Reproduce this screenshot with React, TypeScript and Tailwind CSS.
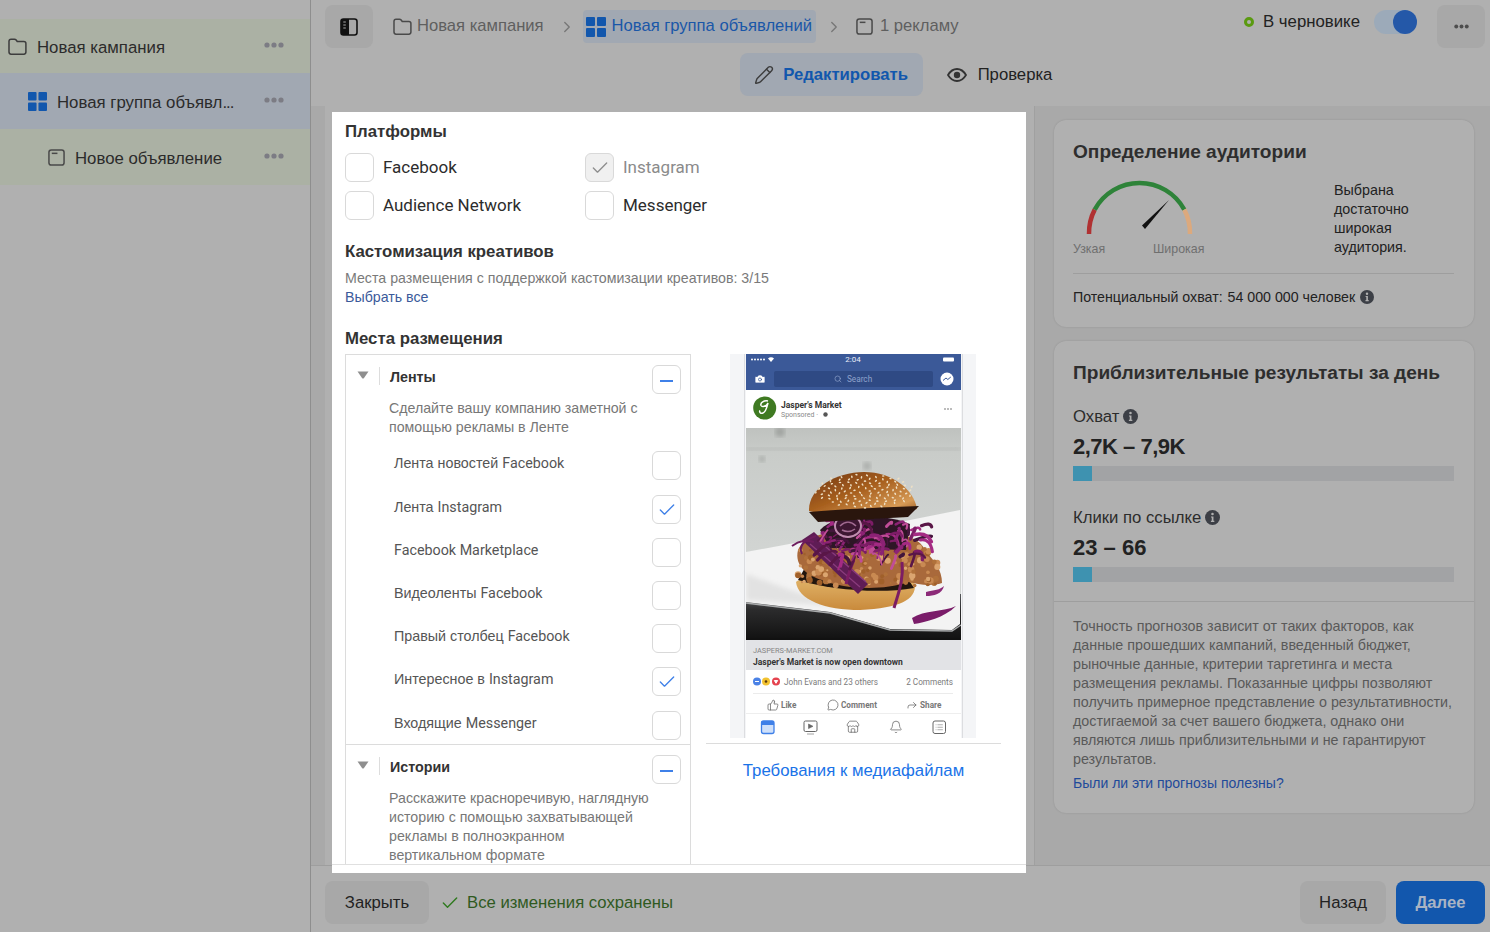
import { Bell, Camera, Check, ChevronRight, Forward, List, MessageCircle, Pencil, Search, Store, ThumbsUp } from 'lucide-react';

const roboto = "font-['Roboto',sans-serif]";

function FolderIcon({ className }: { className?: string }) {
  return (
    <svg viewBox="0 0 20 18" fill="none" stroke="currentColor" strokeWidth="1.6" className={className}>
      <path d="M1 3.5C1 2.1 1.9 1.2 3.2 1.2h3.6c.8 0 1.3.4 1.8 1l1.1 1.5h7c1.2 0 2.2.9 2.2 2.2v9c0 1.3-.9 2.2-2.2 2.2H3.2C1.9 17 1 16.1 1 14.8z" />
    </svg>
  );
}

function GridIcon({ className }: { className?: string }) {
  return (
    <svg viewBox="0 0 20 20" fill="#1257ad" className={className}>
      <rect x="0" y="0" width="9" height="9" rx="1" />
      <rect x="11" y="0" width="9" height="9" rx="1" />
      <rect x="0" y="11" width="9" height="9" rx="1" />
      <rect x="11" y="11" width="9" height="9" rx="1" />
    </svg>
  );
}

function AdIcon({ className }: { className?: string }) {
  return (
    <svg viewBox="0 0 18 18" fill="none" stroke="currentColor" strokeWidth="1.6" className={className}>
      <rect x="1" y="1" width="16" height="16" rx="2.5" />
      <path d="M4 4.6h6" />
    </svg>
  );
}

function Dots({ className }: { className?: string }) {
  return (
    <svg viewBox="0 0 20 6" fill="currentColor" className={className}>
      <circle cx="3" cy="3" r="2.6" />
      <circle cx="10" cy="3" r="2.6" />
      <circle cx="17" cy="3" r="2.6" />
    </svg>
  );
}

function InfoIcon({ className }: { className?: string }) {
  return (
    <svg viewBox="0 0 14 14" className={className}>
      <circle cx="7" cy="7" r="7" fill="#3c3f46" />
      <circle cx="7" cy="3.8" r="1.2" fill="#b0b0b0" />
      <path d="M5.6 6h2.3v4.1h.8v1.1H5.5v-1.1h.8V7.100h-.7z" fill="#b0b0b0" />
    </svg>
  );
}

function Box({ state, className = '' }: { state?: 'check' | 'minus' | 'disabled'; className?: string }) {
  return (
    <span
      className={`flex h-[29px] w-[29px] shrink-0 items-center justify-center rounded-md border border-[#d9d9d9] ${
        state === 'disabled' ? 'bg-[#f0f0f0] border-[#c8c8c8]' : 'bg-white'
      } ${className}`}
    >
      {state === 'check' && <Check size={20} strokeWidth={1.6} className="text-[#3f80e8]" />}
      {state === 'disabled' && <Check size={20} strokeWidth={1.6} className="text-[#8d8d8d]" />}
      {state === 'minus' && <span className="mt-[2px] h-[2px] w-[13px] bg-[#3f80e8]" />}
    </span>
  );
}

function Caret() {
  return (
    <svg viewBox="0 0 12 8" className="mt-[3px] h-2 w-3 shrink-0">
      <path d="M0.500 0.500h11L6.800 7.200c-.4.500-1.200.500-1.600 0z" fill="#8f8f8f" />
    </svg>
  );
}

function SideRow({ tint, pad, icon, label, tall }: { tint: string; pad: string; icon: React.ReactNode; label: React.ReactNode; tall?: boolean }) {
  return (
    <div className={`flex items-center ${tall ? 'h-[56px]' : 'h-[54px]'} ${tint} ${pad} pr-[26px]`}>
      {icon}
      <span className="w-[186px] flex-1 truncate pt-[3px] text-[16.8px] text-[#2b2b2b]">{label}</span>
      <Dots className="h-[6px] w-5 -translate-y-[1px] text-[#7c7c84]" />
    </div>
  );
}

function Platform({ label, state, muted }: { label: string; state?: 'disabled'; muted?: boolean }) {
  return (
    <label className="flex w-[240px] items-center gap-[9px]">
      <Box state={state} />
      <span className={`${roboto} text-[17px] ${muted ? 'text-[#8b8b8b]' : 'text-[#2c2c2c]'}`}>{label}</span>
    </label>
  );
}

function Placement({ children, checked }: { children: React.ReactNode; checked?: boolean }) {
  return (
    <div className="flex h-[43px] justify-between pl-[48px] pr-[9px]">
      <span className="pt-[2px] text-[14.3px] leading-[20px] text-[#555]">{children}</span>
      <Box state={checked ? 'check' : undefined} />
    </div>
  );
}

function SectionHead({ title, children }: { title: string; children: React.ReactNode }) {
  return (
    <>
      <div className="flex items-start pl-[11px] pr-[9px] pt-[10px]">
        <span className="mt-[3px] flex h-[18px] w-[22px] items-start">
          <Caret />
        </span>
        <span className="mt-[2px] h-[18px] border-l border-[#ddd] pl-[10px] text-[14.3px] font-bold leading-[20px] text-[#333]">{title}</span>
        <Box state="minus" className="ml-auto" />
      </div>
      <p className="pl-[43px] pr-[36px] pt-[5px] text-[14.2px] leading-[19px] text-[#777]">{children}</p>
    </>
  );
}

// deterministic scatter for the photo-like burger texture
function rnd(seed: number) {
  const v = Math.sin(seed * 12.9898) * 43758.5453;
  return v - Math.floor(v);
}

const sesame = Array.from({ length: 110 }, (_, i) => {
  const a = (i * 137.5 * Math.PI) / 180;
  const r = Math.sqrt((i + 1) / 110);
  return { x: 135 + Math.cos(a) * r * 50, y: 137 + Math.sin(a) * r * 17, rot: i * 40 };
});

const crumbs = Array.from({ length: 150 }, (_, i) => ({
  x: 68 + rnd(i + 1) * 140,
  y: 192 + rnd(i + 300) * 40,
  r: 1 + rnd(i + 600) * 2.4,
  c: ['#c98a52', '#b0713a', '#dba56f', '#a0602c'][i % 4],
}));

const strandColors = ['#7d1f66', '#a42c83', '#5a1747', '#c04e97', '#8c2474', '#43123a'];
const strands = Array.from({ length: 90 }, (_, i) => {
  const x = 92 + rnd(i + 11) * 100;
  const y = 164 + rnd(i + 111) * 36 + Math.abs(x - 145) * 0.14;
  const dx = (rnd(i + 211) - 0.5) * 34;
  const dy = (rnd(i + 311) - 0.3) * 20;
  return {
    d: `M${x} ${y}q${dx * 0.5 + 4} ${dy * 0.2 - 4} ${dx} ${dy}`,
    c: strandColors[i % strandColors.length],
    w: 1 + rnd(i + 411) * 2.6,
  };
});

function PhonePreview() {
  return (
    <svg viewBox="0 0 246 384" className="h-[384px] w-[246px] shrink-0">
      <defs>
        <linearGradient id="wall" x1="0" y1="0" x2="0" y2="1">
          <stop offset="0" stopColor="#bfc2bf" />
          <stop offset="0.12" stopColor="#c9ccc9" />
          <stop offset="0.6" stopColor="#d2d5d3" />
        </linearGradient>
        <linearGradient id="bun" x1="0" y1="0" x2="1" y2="1">
          <stop offset="0" stopColor="#6f3512" />
          <stop offset="0.45" stopColor="#a8601f" />
          <stop offset="0.8" stopColor="#d69a55" />
          <stop offset="1" stopColor="#8a4d1c" />
        </linearGradient>
        <linearGradient id="lowerBun" x1="0" y1="0" x2="0" y2="1">
          <stop offset="0" stopColor="#e2b56a" />
          <stop offset="1" stopColor="#c98a3c" />
        </linearGradient>
        <linearGradient id="tray" x1="0" y1="0" x2="0" y2="1">
          <stop offset="0" stopColor="#55575a" />
          <stop offset="0.35" stopColor="#2b2b2c" />
          <stop offset="1" stopColor="#111" />
        </linearGradient>
        <filter id="soft">
          <feGaussianBlur stdDeviation="0.6" />
        </filter>
        <filter id="softer">
          <feGaussianBlur stdDeviation="2.5" />
        </filter>
        <clipPath id="photo">
          <rect x="16" y="74" width="215" height="212" />
        </clipPath>
      </defs>

      <rect x="0" width="246" height="384" fill="#f4f5f7" />
      <rect x="14" width="1" height="384" fill="#dcdde0" />
      <rect x="232" width="1" height="384" fill="#dcdde0" />
      <rect x="16" width="215" height="36" fill="#3b5998" />
      <g fill="#fff">
        <circle cx="22" cy="5.500" r="1" />
        <circle cx="25" cy="5.500" r="1" />
        <circle cx="28" cy="5.500" r="1" />
        <circle cx="31" cy="5.500" r="1" />
        <circle cx="34" cy="5.500" r="1" />
        <path d="M38 4.500a4 4 0 0 1 6 0l-3 3.500z" />
        <rect x="213" y="3.500" width="11" height="4" rx="1" />
      </g>
      <text x="123" y="8" textAnchor="middle" fontSize="8" fill="#e8edf7" fontFamily="Roboto, sans-serif">2:04</text>
      <rect x="44" y="17" width="159" height="16" rx="2" fill="#2f4a84" />
      <Search x="104" y="21" width="8" height="8" color="#8fa3cc" strokeWidth={2} />
      <text x="117" y="27.500" fontSize="8.200" fill="#8fa3cc" fontFamily="Roboto, sans-serif">Search</text>
      <Camera x="24" y="19" width="12" height="12" color="#3b5998" fill="#fff" strokeWidth={1.500} />
      <circle cx="217" cy="25" r="6.500" fill="#fff" />
      <path d="M213 26.500l3-2.500 1.800 1.500 3-2.500" fill="none" stroke="#3b5998" strokeWidth="1" />

      <rect x="16" y="36" width="215" height="38" fill="#fff" />
      <circle cx="34.700" cy="54" r="11.500" fill="#3f7a22" />
      <path d="M38 47c-4-1-8 2-7 4.500 1 2 5 1 7-2.500-1 4-2 9-5 10-2.500 1-4-1-3-2.500" fill="none" stroke="#fff" strokeWidth="1.500" />
      <text x="51" y="54" fontSize="8.500" fontWeight="700" fill="#333" fontFamily="Roboto, sans-serif">Jasper's Market</text>
      <text x="51" y="63" fontSize="7" fill="#8a8a8a" fontFamily="Roboto, sans-serif">Sponsored ·</text>
      <circle cx="95.500" cy="60.500" r="2.200" fill="#555" />
      <circle cx="215" cy="55" r="0.800" fill="#666" />
      <circle cx="218" cy="55" r="0.800" fill="#666" />
      <circle cx="221" cy="55" r="0.800" fill="#666" />

      <g clipPath="url(#photo)">
        <rect x="16" y="74" width="215" height="212" fill="url(#wall)" />
        <rect x="16" y="94" width="215" height="2" fill="#aeb1ae" filter="url(#softer)" />
        <circle cx="50" cy="78" r="5" fill="#9fa29f" filter="url(#softer)" />
        <circle cx="32" cy="105" r="3" fill="#a3a6a3" filter="url(#softer)" />
        <circle cx="137" cy="112" r="4" fill="#a8aba8" filter="url(#softer)" />
        <rect x="16" y="240" width="215" height="46" fill="url(#tray)" />
        <path d="M16 198L70 188 230 156V270L222 276 160 275 100 258 16 248z" fill="#f3f3f3" filter="url(#soft)" />
        <path d="M16 220C50 232 80 244 110 252L16 246z" fill="#e2e2e2" filter="url(#softer)" />
        <path d="M16 249L100 259 160 276 222 277 231 271" fill="none" stroke="#a9abac" strokeWidth="1.500" filter="url(#soft)" />
        <g filter="url(#soft)">
          <path d="M66 228C70 220 180 222 185 230C186 246 170 254 130 256C95 256 68 246 66 228Z" fill="url(#lowerBun)" />
          <path d="M68 226C100 236 150 240 184 234L176 222 76 212z" fill="#221510" />
          <path d="M68 196C74 182 100 176 130 176S190 180 196 198C204 206 212 216 212 229C200 233 188 230 178 228C150 238 110 234 92 226C78 222 64 212 68 196Z" fill="#a9693a" />
          {crumbs.map((c, i) => (
            <circle key={i} cx={c.x} cy={c.y} r={c.r} fill={c.c} />
          ))}
          <path d="M90 176C104 160 150 158 180 170L176 196 100 194z" fill="#2f1428" />
          <path d="M72 186L84 178 138 230 128 240z" fill="#5e1f55" />
          <path d="M80 190L130 233M88 186L136 228" stroke="#8b3a7d" strokeWidth="1.200" fill="none" />
          <path d="M62 192C70 186 76 186 84 188M72 200C68 192 74 186 86 182" stroke="#6d1d5d" strokeWidth="2" fill="none" />
          <path d="M124 206C120 214 118 222 116 230M172 208C174 226 168 240 164 254" stroke="#7b1f63" strokeWidth="3" fill="none" />
          {strands.map((s, i) => (
            <path key={i} d={s.d} stroke={s.c} strokeWidth={s.w} fill="none" strokeLinecap="round" />
          ))}
          <ellipse cx="118" cy="172" rx="13" ry="11" fill="#3c1733" stroke="#c08db0" strokeWidth="2" />
          <path d="M110 172c5-5 11-5 16 0M112 176c4 2 9 2 13-1" stroke="#a36b92" strokeWidth="1.500" fill="none" />
          <path d="M182 264C194 256 214 258 226 252C214 264 196 268 184 270z" fill="#7a1f69" />
          <path d="M196 238C204 236 210 236 214 232C212 240 204 242 196 242z" fill="#8c2a78" />
          <path d="M79 157C78 135 105 118 134 118S184 136 187 155C160 162 105 164 79 157Z" fill="url(#bun)" />
          <path d="M79 158C110 155 160 153 189 152L178 163 88 168z" fill="#2a1710" />
          {sesame.map((s, i) => (
            <ellipse key={i} cx={s.x} cy={s.y} rx="1.300" ry="0.800" fill="#efe0c4" transform={`rotate(${s.rot} ${s.x} ${s.y})`} />
          ))}
        </g>
        <rect x="16" y="284" width="215" height="2" fill="#111" />
      </g>

      <rect x="16" y="286" width="215" height="30" fill="#e2e3e6" />
      <text x="23" y="299" fontSize="7.400" fill="#858585" fontFamily="Roboto, sans-serif">JASPERS-MARKET.COM</text>
      <text x="23" y="310.500" fontSize="8.500" fontWeight="700" fill="#333" fontFamily="Roboto, sans-serif">Jasper's Market is now open downtown</text>
      <rect x="16" y="316" width="215" height="68" fill="#fff" />
      <circle cx="27" cy="327.500" r="4" fill="#4b82e6" />
      <circle cx="36" cy="327.500" r="4" fill="#f2c230" />
      <circle cx="46" cy="327.500" r="4" fill="#e5434f" />
      <path d="M25 327.500h4M44.300 326.500h3.400l-1.700 2.800z" stroke="#fff" fill="#fff" strokeWidth="1" />
      <circle cx="36" cy="327.500" r="1.300" fill="#5a3b10" />
      <text x="54" y="331" fontSize="8.200" fill="#7b7b7b" fontFamily="Roboto, sans-serif">John Evans and 23 others</text>
      <text x="223" y="331" textAnchor="end" fontSize="8.200" fill="#7b7b7b" fontFamily="Roboto, sans-serif">2 Comments</text>
      <rect x="23" y="339" width="200" height="0.700" fill="#e3e3e3" />
      <ThumbsUp x="37" y="345" width="12" height="12" color="#666" strokeWidth={1.500} />
      <text x="51" y="354" fontSize="8.200" fontWeight="700" fill="#777" fontFamily="Roboto, sans-serif">Like</text>
      <MessageCircle x="97" y="345" width="12" height="12" color="#666" strokeWidth={1.500} />
      <text x="111" y="354" fontSize="8.200" fontWeight="700" fill="#777" fontFamily="Roboto, sans-serif">Comment</text>
      <Forward x="176" y="345" width="12" height="12" color="#666" strokeWidth={1.500} />
      <text x="190" y="354" fontSize="8.200" fontWeight="700" fill="#777" fontFamily="Roboto, sans-serif">Share</text>
      <rect x="16" y="359" width="215" height="1" fill="#eeeeee" />
      <rect x="31.500" y="367" width="12.500" height="12.500" rx="2" fill="#cfe0fa" stroke="#3f80e8" strokeWidth="1.300" />
      <rect x="31.500" y="367" width="12.500" height="4" fill="#3f80e8" />
      <rect x="74" y="367" width="13" height="10.500" rx="1.500" fill="none" stroke="#666" strokeWidth="1" />
      <path d="M78.500 370l4.500 2.300-4.500 2.300z M77 380h7" fill="#666" stroke="#666" strokeWidth="0.600" />
      <Store x="116" y="366" width="14" height="14" color="#666" strokeWidth={1.300} />
      <Bell x="159" y="366" width="14" height="14" color="#666" strokeWidth={1.300} />
      <rect x="203" y="367" width="12.500" height="12.500" rx="2" fill="none" stroke="#666" strokeWidth="1" />
      <List x="205" y="369" width="8.500" height="8.500" color="#666" strokeWidth={1.500} />
    </svg>
  );
}

function Gauge() {
  return (
    <svg viewBox="0 0 110 58" className="h-[58px] w-[110px]">
      <path d="M3 55A51 51 0 0 1 8.700 30.600" fill="none" stroke="#b03132" strokeWidth="4.500" />
      <path d="M8.700 30.600A51 51 0 0 1 98.300 30.600" fill="none" stroke="#2e8339" strokeWidth="4.500" />
      <path d="M98.300 30.600A51 51 0 0 1 104 55" fill="none" stroke="#dca97d" strokeWidth="4.500" />
      <path d="M56 46.500L59 50 83 21z" fill="#111" />
    </svg>
  );
}

function Metric({ label, value, tight }: { label: string; value: string; tight?: boolean }) {
  return (
    <div>
      <div className="flex h-[20px] items-center gap-[4px] text-[16.7px] text-[#2c2c2c]">
        <span>{label}</span>
        <InfoIcon className="h-[15px] w-[15px] -translate-y-[1px]" />
      </div>
      <div className={`mt-[6px] h-[28px] text-[22px] font-bold leading-[28px] text-[#222] ${tight ? 'tracking-[-0.5px]' : ''}`}>{value}</div>
      <div className="mt-[5px] h-[15px] bg-[#a2a3a5]">
        <div className="h-full w-[19px] bg-[#3e92b0]" />
      </div>
    </div>
  );
}

export default function App() {
  return (
    <div className="relative flex h-[932px] w-[1490px] overflow-hidden bg-[#b0b0b0] font-['Liberation_Sans',Arial,sans-serif]">
      {/* SIDEBAR */}
      <aside className="w-[311px] shrink-0 border-r border-[#8e8e8e] pt-[19px]">
        <SideRow tint="bg-[#abb1a4]" pad="pl-2" label="Новая кампания" icon={<FolderIcon className="mr-[10px] h-[17px] w-[19px] text-[#3d3d3d]" />} />
        <SideRow tall tint="bg-[#a1a8b2]" pad="pl-[28px]" label={<>Новая группа объявл<span className="tracking-[-1px]">...</span></>} icon={<GridIcon className="mr-[10px] h-[19px] w-[19px]" />} />
        <SideRow tall tint="bg-[#abb1a4]" pad="pl-[48px]" label="Новое объявление" icon={<AdIcon className="mr-[10px] h-[17px] w-[17px] text-[#4a4a4a]" />} />
      </aside>

      <main className="flex min-w-0 flex-1 flex-col">
        {/* HEADER */}
        <header className="h-[106px] shrink-0">
          <div className="flex h-[48px] items-start pl-[14px] pr-[5px] pt-[5px]">
            <button className="flex h-[43px] w-[48px] items-center justify-center rounded-lg bg-[#a8a8a8]">
              <svg viewBox="0 0 18 18" className="h-[18px] w-[18px]">
                <rect x="1" y="1" width="16" height="16" rx="2.500" fill="none" stroke="#111" strokeWidth="1.600" />
                <path d="M3.500 1h5.500v16H3.500A2.500 2.500 0 0 1 1 14.500v-11A2.500 2.500 0 0 1 3.500 1z" fill="#111" />
                <path d="M3.300 4h2.500M3.300 7h2.500M3.300 10h2.500" stroke="#aaa" strokeWidth="1" />
              </svg>
            </button>
            <div className="ml-[20px] mt-[5px] flex items-center text-[16.6px] text-[#5f5f5f]">
              <FolderIcon className="mr-[5px] h-[17px] w-[19px] text-[#4a4a4a]" />
              <span>Новая кампания</span>
              <ChevronRight size={18} strokeWidth={1.8} className="ml-[14px] mr-[7px] text-[#777]" />
              <span className="flex h-[33px] items-center rounded bg-[#a1a8b2] pl-[3px] pr-[4px] text-[#1a57a8]">
                <GridIcon className="mr-[6px] h-[20px] w-[20px]" />
                <span>Новая группа объявлений</span>
              </span>
              <ChevronRight size={18} strokeWidth={1.8} className="ml-[9px] mr-[13px] text-[#777]" />
              <AdIcon className="mr-[7px] h-[17px] w-[17px] text-[#4a4a4a]" />
              <span>1 рекламу</span>
            </div>
            <div className="ml-auto flex items-center">
              <span className="h-[10px] w-[10px] -translate-y-[5px] rounded-full border-[3px] border-[#5a9a10]" />
              <span className="ml-[9px] -translate-y-[5px] text-[16.8px] text-[#222]">В черновике</span>
              <span className="relative ml-[14px] mr-[20px] h-[24px] w-[43px] -translate-y-[5px] rounded-full bg-[#9caab9]">
                <span className="absolute right-0 top-0 h-[24px] w-[24px] rounded-full bg-[#2458a8]" />
              </span>
              <button className="flex h-[43px] w-[48px] items-center justify-center rounded-lg bg-[#a8a8a8]">
                <Dots className="h-[5px] w-[15px] text-[#4d4d4d]" />
              </button>
            </div>
          </div>
          <div className="flex justify-center pt-[5px]">
            <button className="flex h-[43px] w-[183px] items-center justify-center gap-[9px] rounded-lg bg-[#a1a8b2] text-[16.7px] font-bold text-[#1257ad]">
              <Pencil size={20} strokeWidth={1.7} className="text-[#3d3d3d]" />
              Редактировать
            </button>
            <button className="flex h-[43px] items-center pl-6 pr-[9px] text-[16.7px] text-[#222]">
              <svg viewBox="0 0 20 14" className="mr-[11px] h-[14px] w-5">
                <path d="M1 7C3.500 2.800 6.500 1 10 1s6.500 1.800 9 6c-2.500 4.200-5.500 6-9 6S3.500 11.200 1 7z" fill="none" stroke="#333" strokeWidth="1.800" />
                <circle cx="10" cy="7" r="3.200" fill="#333" />
              </svg>
              Проверка
            </button>
          </div>
        </header>

        <div className="flex min-h-0 flex-1">
          <div className="w-[14px] shrink-0 bg-[#a9a9a9]" />
          {/* CENTER */}
          <section className="w-[710px] shrink-0 border-r border-[#a0a0a0] pl-[7px] pt-[6px]">
            <div className="relative z-10 h-[761px] w-[694px] bg-white">
              <div className="h-[753px] overflow-hidden border-b border-[#e0e0e0] pl-[13px] pt-[11px]">
                <h3 className="text-[16.8px] font-bold leading-[18px] text-[#333]">Платформы</h3>
                <div className="mt-[12px] flex">
                  <Platform label="Facebook" />
                  <Platform label="Instagram" state="disabled" muted />
                </div>
                <div className="mt-[9px] flex">
                  <Platform label="Audience Network" />
                  <Platform label="Messenger" />
                </div>
                <h3 className="mt-[23px] text-[16.8px] font-bold leading-[18px] text-[#333]">Кастомизация креативов</h3>
                <p className="mt-[8px] text-[14.2px] leading-[19px] text-[#7a7a7a]">Места размещения с поддержкой кастомизации креативов: 3/15</p>
                <a className="block text-[14.2px] leading-[19px] text-[#3b5a9a]">Выбрать все</a>
                <h3 className="mt-[23px] text-[16.8px] font-bold leading-[18px] text-[#333]">Места размещения</h3>

                <div className="mt-[6px] flex items-start">
                  <div className="w-[346px] shrink-0 border border-[#dcdcdc]">
                    <div className="h-[390px] border-b border-[#dcdcdc]">
                      <SectionHead title="Ленты">
                        Сделайте вашу компанию заметной с помощью рекламы в Ленте
                      </SectionHead>
                      <div className="pt-[14px]">
                        <Placement>Лента новостей <span className={roboto}>Facebook</span></Placement>
                        <div className="h-px" />
                        <Placement checked>Лента <span className={roboto}>Instagram</span></Placement>
                        <Placement><span className={roboto}>Facebook Marketplace</span></Placement>
                        <Placement>Видеоленты <span className={roboto}>Facebook</span></Placement>
                        <Placement>Правый столбец <span className={roboto}>Facebook</span></Placement>
                        <Placement checked>Интересное в <span className={roboto}>Instagram</span></Placement>
                        <div className="h-px" />
                        <Placement>Входящие <span className={roboto}>Messenger</span></Placement>
                      </div>
                    </div>
                    <SectionHead title="Истории">
                      Расскажите красноречивую, наглядную историю с помощью захватывающей рекламы в полноэкранном вертикальном формате
                    </SectionHead>
                  </div>
                  <div className="ml-[15px] w-[295px] shrink-0">
                    <div className="pl-[24px]">
                      <PhonePreview />
                    </div>
                    <div className="mt-[5px] border-t border-[#dcdcdc] pt-[17px] text-center text-[16.8px] leading-[20px] text-[#1a73e8]">
                      Требования к медиафайлам
                    </div>
                  </div>
                </div>
              </div>
            </div>
          </section>

          {/* RIGHT COLUMN */}
          <section className="flex-1 bg-[#a9a9a9] pl-[19px] pr-[16px] pt-[14px]">
            <div className="h-[207px] w-[420px] rounded-xl bg-[#b0b0b0] pl-[19px] pr-[20px] pt-[20px] shadow-[0_0_2px_rgba(0,0,0,0.15)]">
              <h2 className="text-[19.1px] font-bold leading-[24px] text-[#2e2e2e]">Определение аудитории</h2>
              <div className="mt-[15px] flex h-[91px]">
                <div className="w-[261px] shrink-0">
                  <div className="pl-[13px]">
                    <Gauge />
                  </div>
                  <div className="mt-[5px] flex text-[12.4px] leading-[14px] text-[#6f6f6f]">
                    <span className="w-[80px]">Узкая</span>
                    <span>Широкая</span>
                  </div>
                </div>
                <p className="pt-[2px] text-[14.3px] leading-[19px] text-[#222]">Выбрана достаточно широкая аудитория.</p>
              </div>
              <div className="mt-[3px] flex h-[48px] items-center border-t border-[#9e9e9e] text-[14.2px] text-[#222]">
                <span>Потенциальный охват:</span>
                <span className="ml-[5px]">54 000 000 человек</span>
                <InfoIcon className="ml-[5px] h-[14px] w-[14px] -translate-y-[1px]" />
              </div>
            </div>

            <div className="mt-[14px] h-[472px] w-[420px] rounded-xl bg-[#b0b0b0] pt-[20px] shadow-[0_0_2px_rgba(0,0,0,0.15)]">
              <div className="h-[241px] border-b border-[#9e9e9e] pl-[19px] pr-[20px]">
                <h2 className="whitespace-nowrap text-[19.1px] font-bold leading-[24px] text-[#2e2e2e]">Приблизительные результаты за день</h2>
                <div className="mt-[22px] space-y-[27px]">
                  <Metric label="Охват" value="2,7K – 7,9K" tight />
                  <Metric label="Клики по ссылке" value="23 – 66" />
                </div>
              </div>
              <div className="px-[19px] pt-[15px] text-[14.3px] leading-[19px] text-[#595959]">
                <p>
                  Точность прогнозов зависит от таких факторов, как данные прошедших кампаний, введенный бюджет, рыночные данные, критерии таргетинга и места размещения рекламы. Показанные цифры позволяют получить примерное представление о результативности, достигаемой за счет вашего бюджета, однако они являются лишь приблизительными и не гарантируют результатов.
                </p>
                <a className="mt-[5px] block text-[14px] text-[#1f4a9a]">Были ли эти прогнозы полезны?</a>
              </div>
            </div>
          </section>
        </div>

        {/* FOOTER */}
        <footer className="flex h-[67px] shrink-0 items-start border-t border-[#9e9e9e] pl-[14px] pr-[5px] pt-[15px]">
          <button className="h-[43px] w-[104px] rounded-lg bg-[#a8a8a8] text-[16.7px] text-[#222]">Закрыть</button>
          <Check size={20} strokeWidth={1.7} className="ml-[11px] mt-[12px] text-[#2f7a1f]" />
          <span className="ml-[7px] mt-[12px] text-[16.7px] leading-[20px] text-[#2f5a1f]">Все изменения сохранены</span>
          <button className="ml-auto h-[43px] w-[86px] rounded-lg bg-[#a8a8a8] text-[16.7px] text-[#222]">Назад</button>
          <button className="ml-[10px] h-[43px] w-[89px] rounded-lg bg-[#1257ad] text-[16.7px] font-bold text-[#a9b4c4]">Далее</button>
        </footer>
      </main>
    </div>
  );
}
